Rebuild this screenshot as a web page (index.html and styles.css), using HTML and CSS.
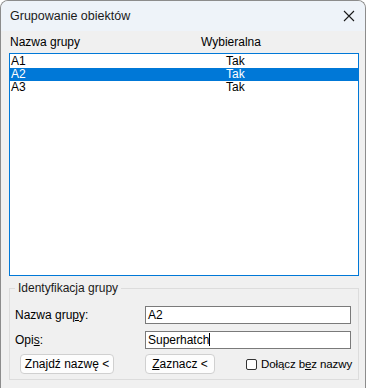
FILE: index.html
```html
<!DOCTYPE html>
<html lang="pl">
<head>
  <meta charset="UTF-8">
  <title>Grupowanie obiektów</title>
  <link rel="stylesheet" href="styles.css">
</head>
<body>
  <div class="dialog">
    <div class="dialog-titlebar">
      <span class="dialog-title">Grupowanie obiektów</span>
      <svg class="dialog-close" width="12" height="12" viewBox="0 0 12 12">
        <path d="M1 1L11 11M11 1L1 11" stroke="#1a1a1a" stroke-width="1.1" fill="none"/>
      </svg>
    </div>
    <div class="dialog-body">
      <div class="list-header">
        <span class="col-name">Nazwa grupy</span>
        <span class="col-sel">Wybieralna</span>
      </div>
      <div class="group-list">
        <div class="group-row"><span class="col-name">A1</span><span class="col-sel">Tak</span></div>
        <div class="group-row selected"><span class="col-name">A2</span><span class="col-sel">Tak</span></div>
        <div class="group-row"><span class="col-name">A3</span><span class="col-sel">Tak</span></div>
      </div>
      <fieldset class="group-ident">
        <legend>Identyfikacja grupy</legend>
        <div class="ident-grid">
          <label class="ident-label">Nazwa gru<u>p</u>y:</label>
          <div class="text-input">A2</div>
          <label class="ident-label">Opi<u>s</u>:</label>
          <div class="text-input">Superhatch<span class="caret"></span></div>
        </div>
        <div class="ident-actions">
          <button class="btn btn-find">Zna<u>j</u>dź nazwę &lt;</button>
          <button class="btn btn-mark"><u>Z</u>aznacz &lt;</button>
          <label class="check">
            <span class="check-box"></span>
            <span>Dołącz b<u>e</u>z nazwy</span>
          </label>
        </div>
      </fieldset>
    </div>
  </div>
</body>
</html>
```

FILE: styles.css
```css
html, body {
  margin: 0;
  padding: 0;
  background: #fff;
}
body {
  font-family: "Liberation Sans", Arial, sans-serif;
  font-size: 12px;
  color: #000;
}
.dialog {
  width: 366px;
  height: 388px;
  box-sizing: border-box;
  border: 1px solid #8c8c8c;
  border-bottom: none;
  border-radius: 8px 8px 0 0;
  background: #f0f0f0;
  overflow: hidden;
  display: flex;
  flex-direction: column;
}
.dialog-titlebar {
  height: 30px;
  flex: none;
  background: #eef3f9;
  display: flex;
  align-items: center;
  justify-content: space-between;
  padding: 0 10px 0 9px;
}
.dialog-title {
  color: #1a1a1a;
  font-size: 12.5px;
}
.dialog-close {
  display: block;
}
.dialog-body {
  padding: 0 6px 0 8px;
  white-space: nowrap;
}
.list-header {
  height: 22px;
  display: flex;
  align-items: center;
  padding-left: 1px;
}
.col-name {
  width: 191px;
  flex: none;
}
.group-list {
  height: 223px;
  box-sizing: border-box;
  border: 1px solid #0078d7;
  background: #fff;
  padding-top: 1px;
}
.group-row {
  height: 13px;
  line-height: 13px;
  display: flex;
  padding-left: 1px;
}
.group-row .col-name {
  width: 215px;
}
.group-row.selected {
  background: #0078d7;
  color: #fff;
}
.group-ident {
  margin: 4px 0 0;
  padding: 0 7px 0 5px;
  border: 1px solid #dcdcdc;
  height: 100px;
  min-width: 0;
  box-sizing: border-box;
}
.group-ident legend {
  padding: 0 3px;
  line-height: 16px;
  color: #1a1a1a;
}
.ident-grid {
  display: grid;
  grid-template-columns: 130px 1fr;
  row-gap: 7px;
  align-items: center;
  margin-top: 10px;
}
.text-input {
  height: 18px;
  box-sizing: border-box;
  border: 1px solid #7a7a7a;
  background: #fff;
  line-height: 16px;
  padding-left: 2px;
}
.caret {
  display: inline-block;
  width: 1px;
  height: 13px;
  background: #000;
  vertical-align: -2px;
}
.ident-actions {
  display: flex;
  align-items: center;
  margin-top: 5px;
  padding-left: 5px;
}
.btn {
  font: inherit;
  color: #000;
  height: 20px;
  box-sizing: border-box;
  border: 1px solid #d0d0d0;
  border-radius: 4px;
  background: #fdfdfd;
  padding: 0;
  flex: none;
}
.btn-find {
  width: 94px;
}
.btn-mark {
  width: 70px;
  margin-left: 31px;
}
.check {
  display: flex;
  align-items: center;
  margin-left: 31px;
  font-size: 11.5px;
  letter-spacing: -0.1px;
}
.check-box {
  width: 11px;
  height: 11px;
  box-sizing: border-box;
  border: 1px solid #333;
  border-radius: 2px;
  background: #fff;
  margin-right: 4px;
}
```
